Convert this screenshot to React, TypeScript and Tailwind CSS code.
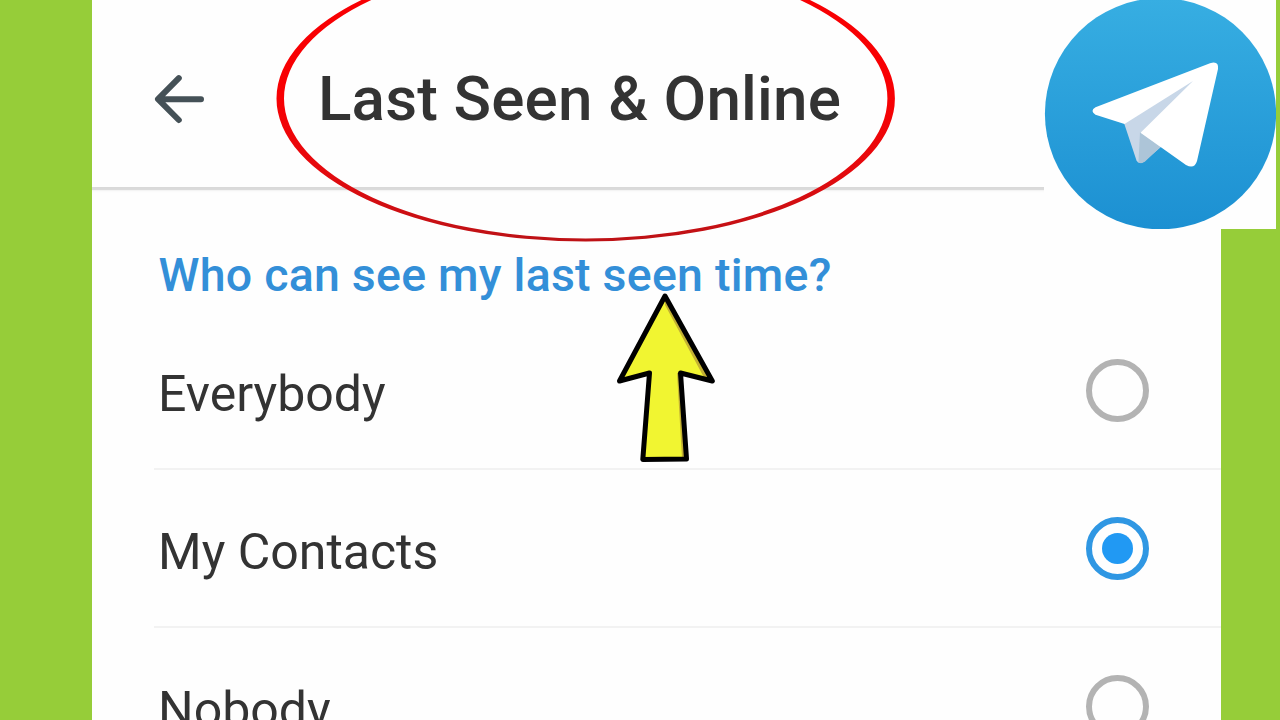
import { useState } from "react";
import clsx from "clsx";

const options = ["Everybody", "My Contacts", "Nobody"];

const BackArrow = () => (
  <svg
    width="52"
    height="52"
    viewBox="0 0 52 52"
    fill="none"
    stroke="#455157"
    strokeWidth="6"
    strokeLinecap="round"
    strokeLinejoin="round"
  >
    <path d="M48 26.2H6M25.8 5.2L5 26.2L25.8 47" />
  </svg>
);

const TelegramLogo = () => (
  <svg width="232" height="229" viewBox="0 0 232 229">
    <defs>
      <linearGradient id="sky" x1="0" y1="0" x2="0" y2="1">
        <stop offset="0" stopColor="#37aee2" />
        <stop offset="1" stopColor="#1c90d2" />
      </linearGradient>
    </defs>
    <circle cx="116.5" cy="113.7" r="115.6" fill="url(#sky)" />
    <path
      d="M80 123L92.5 160.5Q95 165 100 161.5L118 146L165 81L150 78Z"
      fill="#c8d7e8"
    />
    <path
      d="M96 132L94.5 161.5Q96 165 101 161.5L116.5 147Z"
      fill="#adc5d8"
    />
    <path
      d="M80.5 124L51.5 114.8Q45.5 111 51.5 107.3L166 63.2Q175 60.5 174 69L153 161Q150.5 169.5 142 165L96.5 132.8L149 81Z"
      fill="#fff"
    />
  </svg>
);

// hand drawn ring around the title, thicker on its sides
const TitleRing = () => (
  <svg
    className="absolute left-[270px] top-0"
    width="632"
    height="246"
    viewBox="270 0 632 246"
  >
    <defs>
      <linearGradient
        id="ring"
        gradientUnits="userSpaceOnUse"
        x1="0"
        y1="98"
        x2="0"
        y2="241"
      >
        <stop offset="0" stopColor="#f80003" />
        <stop offset="0.5" stopColor="#e50a0e" />
        <stop offset="1" stopColor="#bd1216" />
      </linearGradient>
    </defs>
    <path
      fill="url(#ring)"
      fillRule="evenodd"
      d="M276.5 98.5a309.2 143 0 1 0 618.4 0a309.2 143 0 1 0 -618.4 0ZM284 98.5a301.7 140 0 1 0 603.4 0a301.7 140 0 1 0 -603.4 0Z"
    />
  </svg>
);

const PointerArrow = () => (
  <svg
    className="absolute left-[610px] top-[286px]"
    width="110"
    height="182"
    viewBox="610 286 110 182"
  >
    <path
      d="M665 296L712.3 381L680.5 373L686.5 459L642.8 459.5L649.5 373L619.5 381Z"
      fill="#f1f531"
    />
    <path
      d="M665 300L710 379L704 377.5L665 305ZM677 373H681L686 458H682Z"
      fill="#c3b034"
    />
    <path
      d="M665 296L712.3 381L680.5 373L686.5 459L642.8 459.5L649.5 373L619.5 381Z"
      fill="none"
      stroke="#000"
      strokeWidth="5"
      strokeLinejoin="round"
    />
  </svg>
);

const Radio = ({ checked }: { checked: boolean }) => (
  <span
    className={clsx(
      "flex h-[63px] w-[63px] items-center justify-center rounded-full border-[6px]",
      checked ? "border-[#2f97e3]" : "border-[#b3b3b3]"
    )}
  >
    {checked && (
      <span className="h-[31px] w-[31px] rounded-full bg-[#2199f3]" />
    )}
  </span>
);

const App = () => {
  const [selected, setSelected] = useState("My Contacts");

  return (
    <div className="relative h-screen w-full overflow-hidden bg-[#96cd39] pl-[92px] font-[Roboto,sans-serif] text-[#333333]">
      <main className="h-full w-[1129px] overflow-hidden bg-[#fefefe]">
        <header className="flex h-[187px] items-center pl-[61px] shadow-[0_3px_1px_rgba(0,0,0,0.11),0_4px_3px_rgba(0,0,0,0.04)]">
          <button className="mt-[11px] cursor-pointer">
            <BackArrow />
          </button>
          <h1 className="ml-[113px] mt-[10px] whitespace-nowrap text-[62px] font-medium leading-[72px] tracking-[0.14px]">
            Last Seen & Online
          </h1>
        </header>

        <h2 className="flex h-[125px] items-center pl-[66.5px] pt-[51px] text-[46.5px] font-medium leading-[54px] tracking-[0.23px] text-[#338fd8]">
          Who can see my last seen time?
        </h2>

        <div className="pl-[62px]">
          {options.map((option) => (
            <button
              key={option}
              className="flex h-[157.9px] w-full cursor-pointer items-center justify-between border-b-2 border-[#f2f2f2] pl-1 pr-[72px] pt-0.5"
              onClick={() => setSelected(option)}
            >
              <span className="pt-[7px] text-[50px] leading-[60px]">
                {option}
              </span>
              <Radio checked={selected === option} />
            </button>
          ))}
        </div>
      </main>

      <div className="absolute right-[4px] top-0 bg-[#fefefe]">
        <TelegramLogo />
      </div>
      <TitleRing />
      <PointerArrow />
    </div>
  );
};

export default App;
